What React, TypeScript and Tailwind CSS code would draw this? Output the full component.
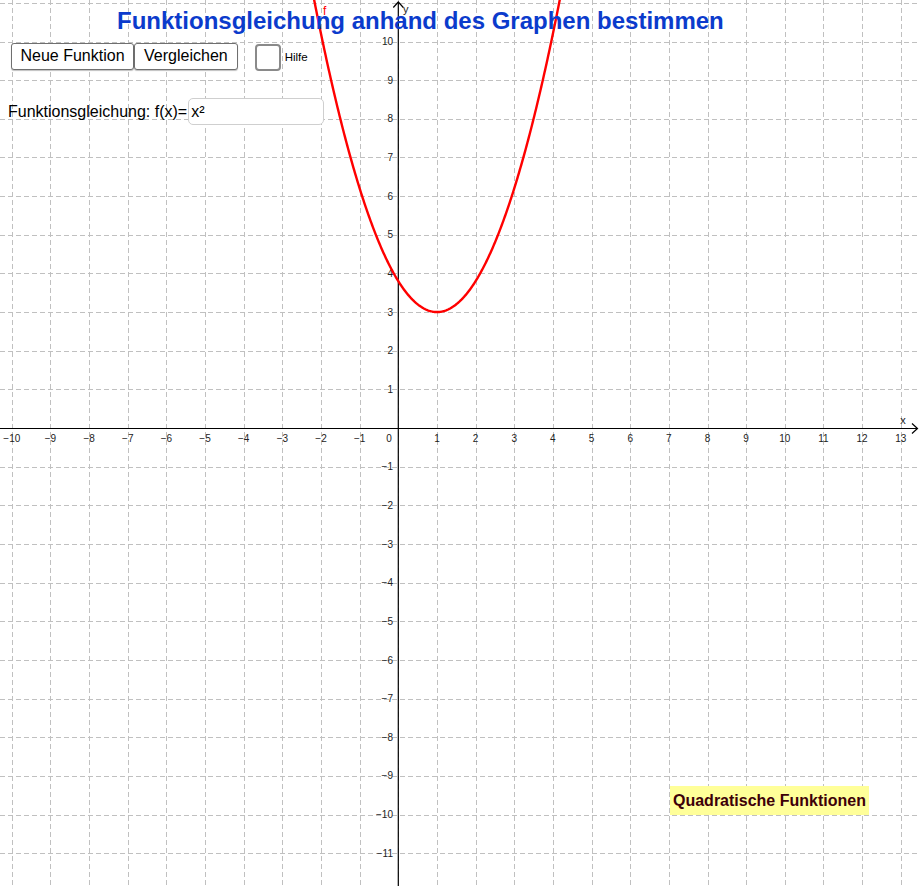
import React from 'react';

const W = 919;
const H = 886;
const OX = 398.3;
const OY = 428;
const U = 38.65;

const px = (x: number) => OX + x * U;
const py = (y: number) => OY - y * U;
const f = (x: number) => 0.8 * (x - 1) * (x - 1) + 3;

const label = (n: number) => (n < 0 ? `\u2212${-n}` : `${n}`);

const Graph: React.FC = () => {
    const xs: number[] = [];
    for (let k = -10; k <= 13; k++) xs.push(k);
    const ys: number[] = [];
    for (let k = -11; k <= 11; k++) ys.push(k);

    const pts: string[] = [];
    for (let x = -2.4; x <= 4.4; x += 0.02) {
        pts.push(`${px(x).toFixed(2)},${py(f(x)).toFixed(2)}`);
    }

    return (
        <svg width={W} height={H} viewBox={`0 0 ${W} ${H}`} className="block" style={{ fontFamily: '"Liberation Sans", Arial, sans-serif' }}>
            <g stroke="#c0c0c0" strokeWidth={1} strokeDasharray="5 3" fill="none">
                {xs.map(k => (
                    <line key={`v${k}`} x1={Math.round(px(k)) + 0.5} y1={0} x2={Math.round(px(k)) + 0.5} y2={H} />
                ))}
                {ys.map(k => (
                    <line key={`h${k}`} x1={0} y1={Math.round(py(k)) + 0.5} x2={W} y2={Math.round(py(k)) + 0.5} />
                ))}
            </g>

            {/* axes */}
            <g stroke="#000" strokeWidth={1.2} fill="none">
                <line x1={0} y1={OY + 0.5} x2={917} y2={OY + 0.5} />
                <line x1={OX} y1={2} x2={OX} y2={H} />
                <polyline points={`912,${OY - 4.5} 917.5,${OY + 0.5} 912,${OY + 5.5}`} />
                <polyline points={`${OX - 5},7.5 ${OX},2 ${OX + 5},7.5`} />
            </g>

            <g fill="#222" fontSize={10}>
                {xs.filter(k => k !== 0).map(k => (
                    <text key={`lx${k}`} x={px(k)} y={442} textAnchor="middle">{label(k)}</text>
                ))}
                <text x={389} y={442} textAnchor="middle">0</text>
                {ys.filter(k => k !== 0 && k < 11).map(k => (
                    <text key={`ly${k}`} x={393} y={py(k) + 3.6} textAnchor="end">{label(k)}</text>
                ))}
                <text x={903} y={424} textAnchor="middle" fontSize={11}>x</text>
                <text x={403} y={13} fontSize={11}>y</text>
            </g>

            <polyline points={pts.join(' ')} fill="none" stroke="#ff0000" strokeWidth={2.4} strokeLinejoin="round" />
            <text x={323} y={15} fill="#ff0000" fontSize={12}>f</text>
        </svg>
    );
};

export default function App() {
    return (
        <div className="relative w-[919px] h-[886px] bg-white overflow-hidden font-['Liberation_Sans',Arial,sans-serif]">
            <Graph />

            <h1 className="absolute left-[117px] top-[6px] text-[24px] leading-[30px] font-bold text-[#0b3bcc] whitespace-nowrap">
                Funktionsgleichung anhand des Graphen bestimmen
            </h1>

            <div className="absolute left-[11px] top-[41px] flex items-center">
                <button className="h-[27px] px-[8.5px] bg-white border border-[#6f6f6f] rounded-[3px] text-[16px] leading-none text-black shadow-[0_1px_1px_rgba(0,0,0,0.25)]">
                    Neue Funktion
                </button>
                <button className="h-[27px] px-[9px] bg-white border border-[#6f6f6f] rounded-[3px] text-[16px] leading-none text-black shadow-[0_1px_1px_rgba(0,0,0,0.25)]">
                    Vergleichen
                </button>
                <label className="flex items-center ml-[17px] mt-[3px] gap-[4px]">
                    <span className="w-[26px] h-[27px] bg-white border-2 border-[#8a8a8a] rounded-[4px]" />
                    <span className="text-[11.5px] text-black">Hilfe</span>
                </label>
            </div>

            <div className="absolute left-[8px] top-[98px] flex items-center gap-[1px]">
                <span className="text-[16px] text-black whitespace-nowrap">Funktionsgleichung: f(x)=</span>
                <div className="w-[136px] h-[27px] bg-white border border-[#cfcfcf] rounded-[5px] flex items-center px-[2px] text-[16px] text-black">
                    x²
                </div>
            </div>

            <div className="absolute left-[670px] top-[786px] h-[29px] px-[3px] flex items-center bg-[#ffff99] text-[16px] font-bold text-[#3d0008] whitespace-nowrap">
                Quadratische Funktionen
            </div>
        </div>
    );
}
